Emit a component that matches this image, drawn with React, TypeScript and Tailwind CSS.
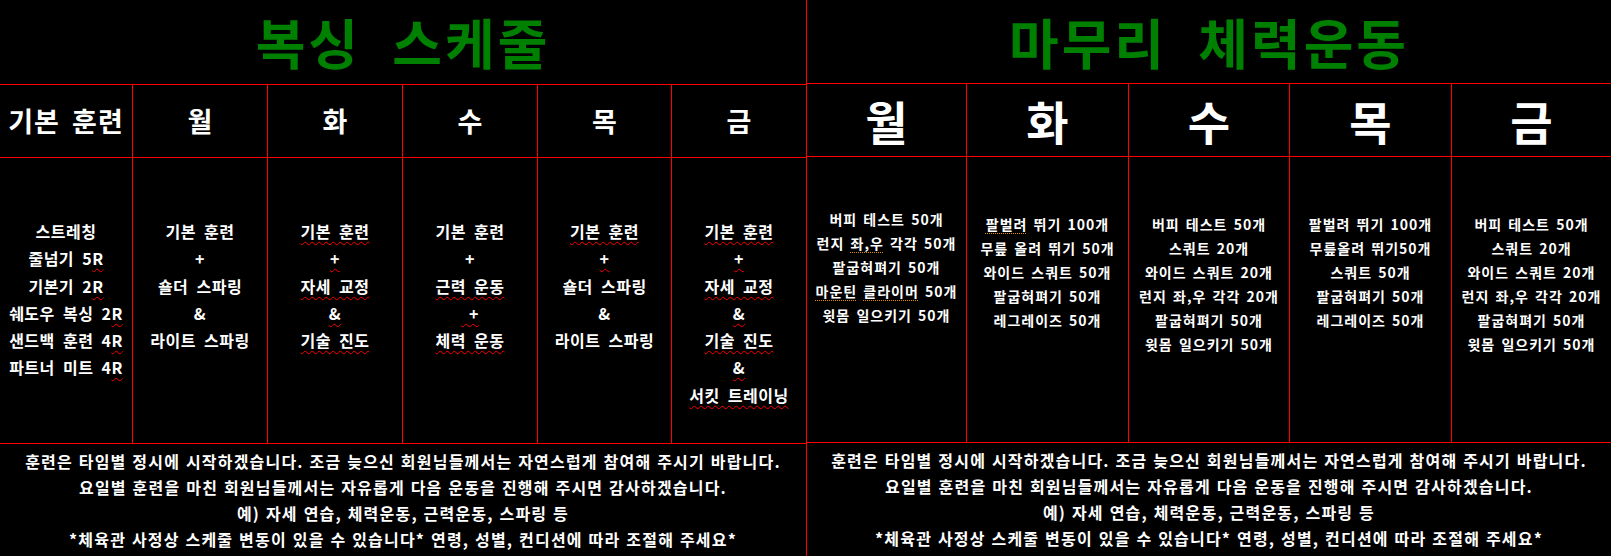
import React from 'react'

type Seg = string | [string, 'w' | 'd']
type Line = Seg[]

const L = (...segs: Seg[]): Line => segs

const boxingDays = ['월', '화', '수', '목', '금']

const boxingBody: Line[][] = [
  [
    L('스트레칭'),
    L('줄넘기 5', ['R', 'w']),
    L('기본기 2', ['R', 'w']),
    L('쉐도우 복싱 2', ['R', 'w']),
    L('샌드백 훈련 4', ['R', 'w']),
    L('파트너 미트 4', ['R', 'w']),
  ],
  [L('기본 훈련'), L('+'), L('숄더 스파링'), L('&'), L('라이트 스파링')],
  [L(['기본 훈련', 'w']), L(['+', 'w']), L(['자세 교정', 'w']), L(['&', 'w']), L(['기술 진도', 'w'])],
  [L('기본 훈련'), L('+'), L(['근력 운동', 'w']), L(['\u00a0+', 'w']), L(['체력 운동', 'w'])],
  [L(['기본 훈련', 'w']), L(['+', 'w']), L('숄더 스파링'), L('&'), L('라이트 스파링')],
  [
    L(['기본 훈련', 'w']),
    L(['+', 'w']),
    L(['자세 교정', 'w']),
    L(['&', 'w']),
    L(['기술 진도', 'w']),
    L(['&', 'w']),
    L(['서킷 트레이닝', 'w']),
  ],
]

const fitnessBody: Line[][] = [
  [
    L('버피 테스트 50개'),
    L('런지 ', ['좌,우', 'd'], ' 각각 50개'),
    L('팔굽혀펴기 50개'),
    L(['마운틴', 'd'], ' ', ['클라이머', 'd'], ' 50개'),
    L('윗몸 일으키기 50개'),
  ],
  [
    L(['팔벌려', 'd'], ' 뛰기 100개'),
    L('무릎 올려 뛰기 50개'),
    L('와이드 스쿼트 50개'),
    L('팔굽혀펴기 50개'),
    L('레그레이즈 50개'),
  ],
  [
    L('버피 테스트 50개'),
    L('스쿼트 20개'),
    L('와이드 스쿼트 20개'),
    L('런지 좌,우 각각 20개'),
    L('팔굽혀펴기 50개'),
    L('윗몸 일으키기 50개'),
  ],
  [
    L('팔벌려 뛰기 100개'),
    L('무릎올려 뛰기50개'),
    L('스쿼트 50개'),
    L('팔굽혀펴기 50개'),
    L('레그레이즈 50개'),
  ],
  [
    L('버피 테스트 50개'),
    L('스쿼트 20개'),
    L('와이드 스쿼트 20개'),
    L('런지 좌,우 각각 20개'),
    L('팔굽혀펴기 50개'),
    L('윗몸 일으키기 50개'),
  ],
]

const notes = [
  '훈련은 타임별 정시에 시작하겠습니다. 조금 늦으신 회원님들께서는 자연스럽게 참여해 주시기 바랍니다.',
  '요일별 훈련을 마친 회원님들께서는 자유롭게 다음 운동을 진행해 주시면 감사하겠습니다.',
  '예) 자세 연습, 체력운동, 근력운동, 스파링 등',
  '*체육관 사정상 스케줄 변동이 있을 수 있습니다* 연령, 성별, 컨디션에 따라 조절해 주세요*',
]

const Text = ({ line }: { line: Line }) => (
  <div className="whitespace-pre">
    {line.map((s, i) =>
      typeof s === 'string' ? (
        <span key={i}>{s}</span>
      ) : s[1] === 'w' ? (
        <span
          key={i}
          className="underline decoration-wavy decoration-[#ff0000] decoration-1 underline-offset-[3px]"
        >
          {s[0]}
        </span>
      ) : (
        <span
          key={i}
          className="underline decoration-dotted decoration-[#e08a00] decoration-1 underline-offset-[3px]"
        >
          {s[0]}
        </span>
      )
    )}
  </div>
)

const Notes = () => (
  <div className="flex-1 flex flex-col items-center pt-[4px] text-[16px] leading-[26px] font-bold tracking-[1.2px] [word-spacing:1px]">
    {notes.map((n) => (
      <div key={n} className="whitespace-pre">
        {n}
      </div>
    ))}
  </div>
)

export default function App() {
  return (
    <div className="w-[1611px] h-[556px] bg-black text-white flex overflow-hidden font-['Noto_Sans_CJK_KR','Noto_Sans',sans-serif]">
      {/* boxing schedule */}
      <div className="w-[807px] h-full flex flex-col border-r border-[#ff0000]">
        <div className="h-[85px] border-b border-[#ff0000] flex items-center justify-center">
          <h1 className="text-[54px] leading-none font-bold text-[#008000] tracking-[3px] [word-spacing:16px]">
            복싱 스케줄
          </h1>
        </div>
        <div className="h-[73px] border-b border-[#ff0000] grid grid-cols-[133px_135px_135px_135px_134px_1fr] text-[27px] font-bold">
          <div className="border-r border-[#ff0000] flex items-center justify-center tracking-[1px] [word-spacing:5px]">
            기본 훈련
          </div>
          {boxingDays.map((d, i) => (
            <div
              key={d}
              className={`flex items-center justify-center ${i < 4 ? 'border-r border-[#ff0000]' : ''}`}
            >
              {d}
            </div>
          ))}
        </div>
        <div className="h-[286px] border-b border-[#ff0000] grid grid-cols-[133px_135px_135px_135px_134px_1fr] text-[16px] leading-[27.3px] font-bold tracking-[0.5px] [word-spacing:4px]">
          {boxingBody.map((col, i) => (
            <div
              key={i}
              className={`flex flex-col items-center pt-[60px] ${i < 5 ? 'border-r border-[#ff0000]' : ''}`}
            >
              {col.map((line, j) => (
                <Text key={j} line={line} />
              ))}
            </div>
          ))}
        </div>
        <Notes />
      </div>

      {/* finishing workout */}
      <div className="flex-1 h-full flex flex-col">
        <div className="h-[84px] border-b border-[#ff0000] flex items-center justify-center">
          <h1 className="text-[54px] leading-none font-bold text-[#008000] tracking-[3px] [word-spacing:16px]">
            마무리 체력운동
          </h1>
        </div>
        <div className="h-[73px] border-b border-[#ff0000] grid grid-cols-[160px_162px_161px_162px_1fr] text-[46px] font-bold">
          {boxingDays.map((d, i) => (
            <div
              key={d}
              className={`flex items-center justify-center ${i < 4 ? 'border-r border-[#ff0000]' : ''}`}
            >
              {d}
            </div>
          ))}
        </div>
        <div className="h-[286px] border-b border-[#ff0000] grid grid-cols-[160px_162px_161px_162px_1fr] text-[14px] leading-[24px] font-bold tracking-[1px] [word-spacing:2px]">
          {fitnessBody.map((col, i) => (
            <div
              key={i}
              className={`flex flex-col items-center ${i === 0 ? 'pt-[50px]' : 'pt-[55px]'} ${
                i < 4 ? 'border-r border-[#ff0000]' : ''
              }`}
            >
              {col.map((line, j) => (
                <Text key={j} line={line} />
              ))}
            </div>
          ))}
        </div>
        <Notes />
      </div>
    </div>
  )
}
